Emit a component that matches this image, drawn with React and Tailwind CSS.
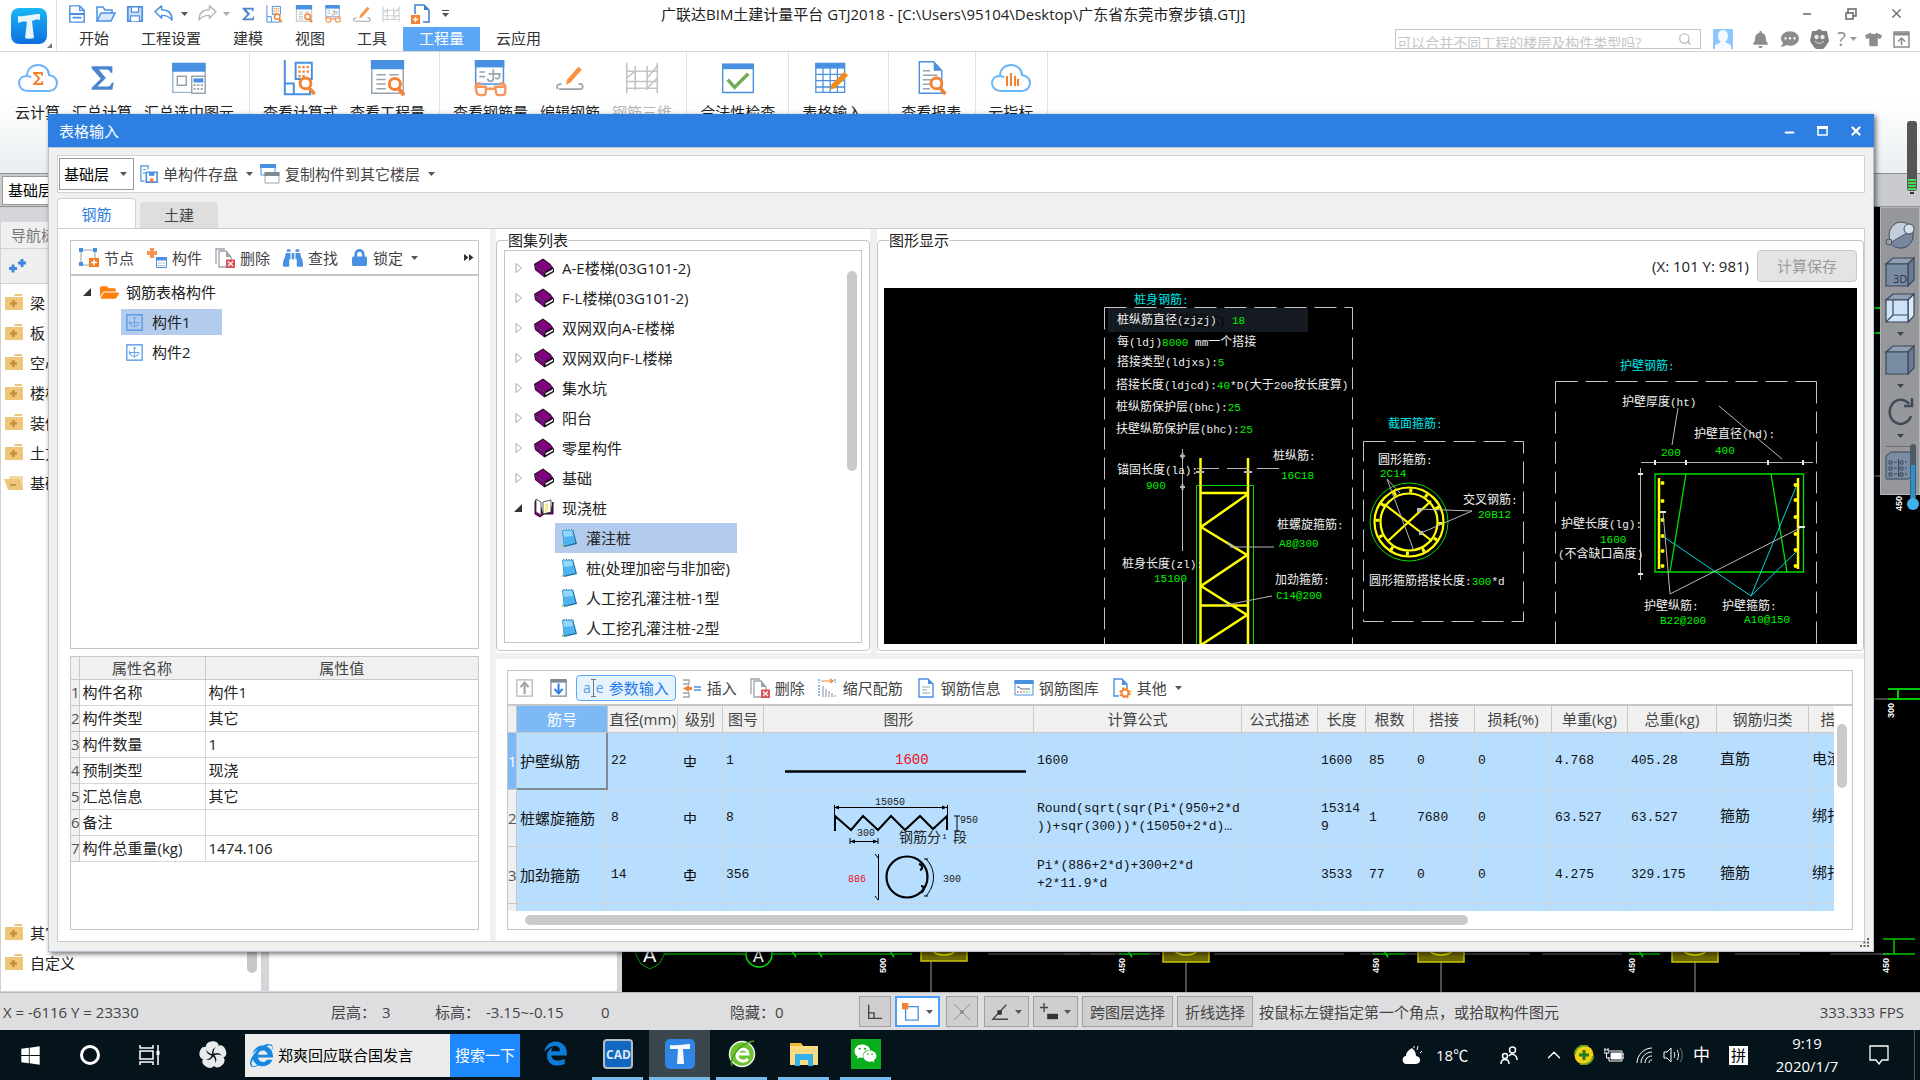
import React from 'react';
import {
  FaBell,
  FaBinoculars,
  FaCommentDots,
  FaEdgeLegacy,
  FaFolderOpen,
  FaInternetExplorer,
  FaLock,
  FaTshirt,
  FaWeixin,
  FaWindows,
} from 'react-icons/fa';
import { ChevronUp, Minus, Search, Square, X } from 'lucide-react';

const BLUE = '#4a90e2';
const ORANGE = '#f58232';
const GREY = '#9aa3aa';

/* ---------- icons ---------- */

const Svg = ({ size = 20, children, className = '', ...rest }) => (
  <svg width={size} height={size} viewBox="0 0 20 20" fill="none" className={`shrink-0 ${className}`} {...rest}>
    {children}
  </svg>
);

const Caret = ({ className = 'text-[#555]' }) => (
  <svg width="7" height="4" viewBox="0 0 7 4" className={`shrink-0 ${className}`}>
    <path d="M0 0h7L3.5 4z" fill="currentColor" />
  </svg>
);

const NewIcon = () => (
  <Svg size={18}>
    <path d="M2 1h11l5 5v13H2z" stroke={BLUE} strokeWidth="1.6" />
    <path d="M13 1v5h5" stroke={BLUE} strokeWidth="1.4" />
    <path d="M2 10h16M5 14h10" stroke={BLUE} strokeWidth="2" />
  </Svg>
);

const OpenIcon = () => (
  <Svg size={20}>
    <path d="M1 17V3h6l2 3h7v3" stroke={BLUE} strokeWidth="1.5" />
    <path d="M1 17l4-8h14l-4 8z" stroke={BLUE} strokeWidth="1.5" fill="#d7e8fb" />
  </Svg>
);

const SaveIcon = ({ size = 18 }) => (
  <Svg size={size}>
    <path d="M2 2h16v16H2z" stroke={BLUE} strokeWidth="2" fill="#cfe2f8" />
    <path d="M6 2h8v6H6z" fill="#fff" stroke={BLUE} strokeWidth="1.4" />
    <path d="M5 18v-6h10v6" fill="#fff" stroke={BLUE} strokeWidth="1.4" />
  </Svg>
);

const UndoIcon = ({ color = BLUE, flip = false }) => (
  <Svg size={19} className={flip ? '-scale-x-100' : ''}>
    <path d="M1 8l7-6v4c6 0 11 3 11 11-3-4-6-5-11-5v3z" stroke={color} strokeWidth="1.5" strokeLinejoin="round" />
  </Svg>
);

const SigmaIcon = ({ size = 16, color = '#4a86d0' }) => (
  <Svg size={size}>
    <path d="M2 1h16v5h-1.5C16 4 15 3.500 13 3.500H7.500L13 10l-6.500 6.500H14c2 0 3-1 3.500-3H19L18 19H2v-1.500L9 10.500 2 2.500z" fill={color} />
  </Svg>
);

const Magnifier = ({ x = 0, y = 0 }) => (
  <g transform={`translate(${x} ${y})`} stroke={ORANGE} strokeWidth="1.6">
    <circle cx="4" cy="4" r="3" fill="#fff" />
    <path d="M6 6.500l3 3.500" strokeWidth="2" />
  </g>
);

const CalcViewIcon = ({ size = 18 }) => (
  <Svg size={size}>
    <path d="M1 0v19h14v-5M1 13h5v6" stroke={BLUE} strokeWidth="1.100" />
    <path d="M7 1.500h9v9H7z" fill="#fff" stroke={BLUE} strokeWidth="1.100" />
    <path d="M8.500 4h6M8.500 6.500h6M8.500 9h4" stroke={ORANGE} strokeWidth="1.300" strokeDasharray="1.300 1" />
    <Magnifier x={8.500} y={9} />
  </Svg>
);

const AmountViewIcon = ({ size = 18 }) => (
  <Svg size={size}>
    <path d="M1.500 1h17v17h-17z" stroke={GREY} strokeWidth=".8" fill="#fff" />
    <path d="M1 0h18v5H1z" fill={BLUE} />
    <path d="M4 8h5M4 10.500h5M4 13h5M4 15.500h5M11 8h5" stroke={GREY} strokeWidth=".8" />
    <Magnifier x={10} y={9} />
  </Svg>
);

const GlassesIcon = ({ size = 18 }) => (
  <Svg size={size}>
    <path d="M2 1h15v12H2z" fill="#fff" stroke={BLUE} strokeWidth=".8" />
    <path d="M1.500 0h16v4h-16z" fill={BLUE} />
    <path d="M4 6.500h3M4 9h3M11.500 5v5c0 2-3 2-3 0M9 7.500h6c0 3-1.500 3-2.500 2" stroke={GREY} strokeWidth=".9" />
    <path d="M2 15c0-2 1.500-3 3-2M18 15c0-2-1.500-3-3-2M2 14.500h5.500v3c0 2-5 2-5 0zM12.500 14.500H18v3c0 2-5 2-5 0zM7.500 15.500h5" stroke="#f9955a" strokeWidth="1.300" />
  </Svg>
);

const EditIcon = ({ size = 18 }) => (
  <Svg size={size}>
    <path d="M1 18c-1-3 1-4 3-3.500M16 14.500c3-1 4 2 2 3.500H2" stroke={GREY} strokeWidth="1.200" />
    <path d="M7 15l1-4 8-9 2.500 2L10.500 13z" fill="#fb9140" />
  </Svg>
);

const GridIcon = ({ size = 18 }) => (
  <Svg size={size}>
    <path d="M1 1v18M6 3v14M13 3v14M19 1v18M1 6h18M1 12h18M1 16h18M6 6L1 10M19 3l-6 7M19 10l-6 6" stroke="#bfc3c6" strokeWidth=".9" />
  </Svg>
);

const AddDocIcon = () => (
  <Svg size={20}>
    <path d="M4 10V1h9l5 5v12h-6" stroke="#3b7fd0" strokeWidth="1.500" />
    <path d="M13 1v5h5" fill="#3b7fd0" />
    <path d="M0 11h9v9H0z" fill={ORANGE} />
    <path d="M2 15.500h5M4.500 13v5" stroke="#fff" strokeWidth="1.300" />
  </Svg>
);

const Cloud = ({ children }) => (
  <svg width="40" height="36" viewBox="0 0 40 36" fill="none" className="shrink-0">
    <path d="M10 31C4 31 1 27 1 23c0-4 3-7 8-7 0-7 5-11 11-11s11 4 11 10c5 1 8 4 8 8s-3 8-8 8zM9 16c2 0 3 .5 4 1.500" stroke="#6ab4f8" strokeWidth="2" />
    {children}
  </svg>
);

const SummarySelectedIcon = () => (
  <Svg size={36}>
    <path d="M1 2h18v16H1z" stroke="#9db5cc" strokeWidth=".8" />
    <path d="M.600 1.500h18.500v5H.600z" fill={BLUE} />
    <path d="M3.500 9h5v5h-5z" stroke={GREY} strokeWidth=".8" />
    <path d="M11.500 9h7.500v9.500h-7.500z" fill="#fff" stroke={GREY} strokeWidth=".8" />
    <path d="M12.500 10.200h5.500v2.300h-5.500z" fill={BLUE} />
    <path d="M12.500 14h5.500M12.500 16h5.500" stroke={GREY} strokeWidth="1" strokeDasharray="1.200 .8" />
  </Svg>
);

const CheckWindowIcon = () => (
  <Svg size={34}>
    <path d="M1 2h18v16.500H1z" stroke={BLUE} strokeWidth=".8" fill="#fff" />
    <path d="M.600 1.500h18.800v3.300H.600z" fill={BLUE} />
    <path d="M4 11l4 4.500 8-8" stroke="#6fab50" strokeWidth="2" />
  </Svg>
);

const TableInputIcon = () => (
  <Svg size={36}>
    <path d="M1 2h16v16H1zM5 4v14M9 4v14M13 4v14M1 8h16M1 11.500h16M1 15h16" stroke={BLUE} strokeWidth=".7" />
    <path d="M.700 1.500h16.600v3.300H.700z" fill={BLUE} />
    <path d="M9 16.500l.800-3 7-7 2.200 2-7 7z" fill="#f08c1c" />
  </Svg>
);

const ReportIcon = () => (
  <Svg size={36}>
    <path d="M3.500 1h8l4.500 5v12.500H3.500z" stroke={BLUE} strokeWidth=".8" />
    <path d="M11.500 1v5H16z" fill={BLUE} />
    <path d="M5.500 6h4M5.500 8.500h8M5.500 11h5M5.500 13.500h4M5.500 16h4" stroke={GREY} strokeWidth=".8" />
    <Magnifier x={9} y={9} />
  </Svg>
);

const NodeIcon = () => (
  <Svg>
    <path d="M2 2h14v15H2z" stroke={GREY} strokeWidth="1" />
    <path d="M0 0h4v4H0zM14 0h4v4h-4zM0 14h4v4H0z" fill={BLUE} />
    <path d="M10 10h10v9H10z" fill="#f47b20" />
    <path d="M12 14.500h6M15 11.500v6" stroke="#fff" strokeWidth="1.500" />
  </Svg>
);

const PartIcon = () => (
  <Svg>
    <path d="M3 0h4v3h3v4H7v3H3V7H0V3h3z" fill="#f79256" />
    <path d="M9.500 9.500h10v10h-10z" fill="#fff" stroke={BLUE} />
    <path d="M9 9h11v3.500H9z" fill={BLUE} />
    <path d="M11 15h7M11 17.500h7" stroke={GREY} strokeDasharray="1.600 1" />
  </Svg>
);

const DeleteIcon = () => (
  <Svg>
    <path d="M1 16V1h9" stroke={GREY} strokeWidth="1.300" />
    <path d="M4 3h7l5 6v10H4z" stroke={GREY} strokeWidth="1.300" fill="#fff" />
    <path d="M11 3v6h5z" fill={GREY} />
    <path d="M11 11.500h9V20h-9z" fill="#d9515a" />
    <path d="M13 13.500l5 4.500M18 13.500L13 18" stroke="#fff" strokeWidth="1.100" />
  </Svg>
);

// chunky square-cut binoculars
const FindIcon = () => <FaBinoculars size={20} color={BLUE} className="shrink-0" />;

const SinglePartIcon = () => (
  <Svg size={18}>
    <path d="M1 18V1h8v4M1 18h4M3.500 5h3M3.500 9h2" stroke={BLUE} strokeWidth="1.300" />
    <path d="M7 8h12v11H7z" stroke={BLUE} strokeWidth="1.800" fill="#fff" />
    <path d="M10 8h6v4h-6z" fill={BLUE} />
    <path d="M11 15h4v4h-4z" fill={ORANGE} />
  </Svg>
);

const CopyPartIcon = () => (
  <Svg>
    <path d="M1 1h14v10H1z" stroke={BLUE} fill="#fff" />
    <path d="M0 0h16v4H0z" fill={BLUE} />
    <path d="M5 9h14v10H5z" stroke={GREY} fill="#fff" />
    <path d="M4.500 8h15v4h-15z" fill="#7f8b93" />
  </Svg>
);

const RebarNodeIcon = () => (
  <Svg size={17}>
    <path d="M1 1h18v18H1z" stroke={BLUE} strokeWidth="1.400" />
    <path d="M10 4v12M4 10h12M12 5c-3-2-3 0-2 2M5 10c0 6 8 6 10 1M4 8v4" stroke="#69a6ea" strokeWidth="1.200" />
  </Svg>
);

const BookIcon = () => (
  <Svg>
    <path d="M0 6L9 .500l7.500 5.500L20 11v3l-9.500 5.500L1 12z" fill="#1b0a1b" />
    <path d="M1.500 6.500L9 1.500l9.500 7.500-8 5z" fill="#800080" />
    <path d="M1 8l9 7v3.500L1.500 11.500z" fill="#800080" />
    <path d="M11 15.500l8-4.500M11 18l8-4.500" stroke="#1b0a1b" />
    <path d="M11.500 15.300l7.500-4.200v2l-7.500 4.200z" fill="#f2f2f2" />
    <path d="M1.500 7.500l9 7" stroke="#d9a0d9" strokeWidth=".8" strokeDasharray="1.500 1" />
  </Svg>
);

const OpenBookIcon = () => (
  <Svg>
    <path d="M1 4v12l5 3 4-3h9V4l-2 10-8 2-4-12-3-2z" fill="#800080" stroke="#2a0a2a" />
    <path d="M2 1l5 3v13l-5-3zM17 2L9 4v12l8-2z" fill="#fff" stroke="#333" strokeWidth=".8" />
    <path d="M11 6l3-1v8l-3 1z" fill="#f5ec7a" />
  </Svg>
);

const NoteIcon = () => (
  <Svg>
    <path d="M2 1h11l4 15-13 3z" fill="#1f6c9c" />
    <path d="M2 2h10.500l3 13-12.500 3c1-5 0-11-1-16z" fill="#4db4ef" />
    <path d="M3 3h9l1 5-9 1z" fill="#93d6fa" />
    <path d="M2 1.500h11" stroke="#e8f3fa" strokeWidth="1.200" strokeDasharray="1.500 1" />
    <path d="M1 19l2-3 1 2z" fill="#9bbf57" />
  </Svg>
);

const NavFolderIcon = ({ open = false }) => (
  <Svg size={20}>
    {open ? (
      <>
        <path d="M5 3h14v13H6z" fill="#f3d9a2" />
        <path d="M0 6h16l3 11H4z" fill="#efc679" />
        <path d="M6 12h6" stroke="#b98a36" strokeWidth="1.500" />
      </>
    ) : (
      <>
        <path d="M1 4h18v13H1zM11 1h7v2h-8z" fill="#efc679" />
        <path d="M6 10.500h7M9.500 7v7" stroke="#c4913a" strokeWidth="2.500" />
      </>
    )}
  </Svg>
);

const MoveIcon = ({ down = false }) => (
  <Svg size={18}>
    <path d="M1 1h17v18H1z" stroke={down ? '#7d8b96' : '#b5b5b5'} strokeWidth="1.400" />
    {down && <path d="M1 0h17v4H1z" fill="#7d8b96" />}
    <path
      d={down ? 'M9.500 5v10M5 11l4.500 5L14 11' : 'M9.500 17V5M5 9l4.500-5L14 9'}
      stroke={down ? '#2d7fe2' : '#a0a0a0'}
      strokeWidth="2.200"
    />
  </Svg>
);

const InsertIcon = () => (
  <Svg>
    <path d="M1 2h6v4H1M1 15h6v4H1" stroke={GREY} strokeWidth="1.300" />
    <path d="M7 9v-2l-6 3.500L7 14v-2h3V9z" fill={ORANGE} />
    <path d="M12 9h7M12 12h7" stroke={BLUE} strokeWidth="1.600" />
  </Svg>
);

const ScaleIcon = () => (
  <Svg>
    <path d="M3 3h11M12 1l3 2-3 2" stroke={ORANGE} strokeWidth="1.200" />
    <path d="M1 1v4M17 1v4M1 7v12" stroke={BLUE} strokeWidth="1.200" strokeDasharray="2 1" />
    <path d="M5 8v11M8 11v8M11 13v6M14 15v4M17 17v2" stroke={GREY} strokeWidth="1.200" />
  </Svg>
);

const InfoDocIcon = () => (
  <Svg>
    <path d="M3 1h9l5 5v13H3z" stroke={BLUE} strokeWidth="1.400" />
    <path d="M12 1v5h5z" fill={BLUE} />
    <path d="M6 9h8M6 12h5M6 15h8" stroke={GREY} />
  </Svg>
);

const LibraryIcon = () => (
  <Svg>
    <path d="M1 3h18v14H1z" stroke={BLUE} />
    <path d="M.500 2h19v4H.500z" fill={BLUE} />
    <path d="M3 9h2l2 2h9" stroke="#5a6b78" />
    <path d="M3 14h5" stroke="#e34f4f" strokeDasharray="2 1" />
    <path d="M9 14h7" stroke="#5bbf4a" strokeDasharray="2 1" />
  </Svg>
);

const OtherIcon = () => (
  <Svg>
    <path d="M7 18H2V1h8l5 5v4" stroke={BLUE} strokeWidth="1.400" />
    <path d="M10 1v6h5z" fill={BLUE} />
    <circle cx="13" cy="15" r="3.500" stroke={ORANGE} strokeWidth="2" />
    <circle cx="13" cy="15" r="5" stroke={ORANGE} strokeWidth="1.500" strokeDasharray="2 2" />
  </Svg>
);

const AppLogo = () => (
  <svg width="36" height="36" viewBox="0 0 36 36" className="shrink-0">
    <defs>
      <linearGradient id="logo" x1="0" y1="0" x2="0" y2="1">
        <stop offset="0" stopColor="#19b6f5" />
        <stop offset="1" stopColor="#0e6fdf" />
      </linearGradient>
    </defs>
    <rect width="36" height="36" rx="8" fill="url(#logo)" />
    <path d="M7 8c7 1 14-2 22-2v6c-3-1-5 0-8 1l2 17c-3 1-7 1-9 0l2-16c-3-1-6 0-9 1z" fill="#e6f4fd" />
  </svg>
);

/* ---------- application header ---------- */

const menuTabs = ['开始', '工程设置', '建模', '视图', '工具', '工程量', '云应用'];

const Header = () => (
  <header className="flex h-[52px] shrink-0 border-b border-[#d5d5d5] bg-white">
    <div className="relative flex w-[57px] shrink-0 items-center border-r border-[#e0e0e0] pl-[11px]">
      <AppLogo />
      <svg width="5" height="5" viewBox="0 0 5 5" className="absolute bottom-[3px] right-1">
        <path d="M5 0v5H0z" fill="#777" />
      </svg>
    </div>
    <div className="flex min-w-0 flex-1 flex-col">
      <div className="flex h-[27px] items-center justify-between">
        <div className="flex items-center pl-[11px]">
          <div className="flex items-center gap-[10px]">
            <NewIcon />
            <OpenIcon />
            <SaveIcon />
            <UndoIcon />
          </div>
          <div className="flex items-center gap-[10px] pl-2">
            <Caret />
            <UndoIcon color="#b8b8b8" flip />
          </div>
          <div className="flex items-center gap-[11px] pl-[6px]">
            <Caret className="text-[#aaa]" />
            <SigmaIcon size={14} />
            <CalcViewIcon />
            <AmountViewIcon />
            <GlassesIcon />
            <EditIcon />
            <GridIcon />
            <AddDocIcon />
            <span className="flex flex-col items-center gap-[2px]">
              <span className="h-px w-[7px] bg-[#444]" />
              <Caret />
            </span>
          </div>
        </div>
        <h1 className="flex-1 whitespace-nowrap pl-[212px] text-[15px] leading-5 text-[#222]">
          广联达BIM土建计量平台 GTJ2018 - [C:\Users\95104\Desktop\广东省东莞市寮步镇.GTJ]
        </h1>
        <div className="flex items-center gap-8 pr-4 text-[#666]">
          <button aria-label="最小化">
            <Minus size={12} strokeWidth={3} />
          </button>
          <button aria-label="还原">
            <svg width="12" height="12" viewBox="0 0 12 12" fill="none" stroke="currentColor" strokeWidth="1.500">
              <path d="M1 5h7v6H1zM3 5V1h8v7H8" />
            </svg>
          </button>
          <button aria-label="关闭">
            <X size={15} strokeWidth={2} />
          </button>
        </div>
      </div>
      <div className="flex flex-1 items-center justify-between">
        <nav className="flex h-full pl-[6px]">
          {menuTabs.map((t) => (
            <button
              key={t}
              className={`px-4 pb-[3px] text-[15px] leading-5 ${t === '工程量' ? 'bg-[#5ba6f6] text-white' : 'text-[#333]'}`}
            >
              {t}
            </button>
          ))}
        </nav>
        <div className="flex items-center pr-[10px] text-[#8c8c8c]">
          <label className="flex h-[20px] w-[306px] items-center overflow-hidden border border-[#c4c4c4] pl-px pr-2">
            <input
              className="min-w-0 flex-1 pt-[7px] text-[14px] leading-5 outline-none placeholder:text-[#c6c6c6]"
              placeholder="可以合并不同工程的楼层及构件类型吗?"
              aria-label="搜索"
            />
            <Search size={14} className="text-[#b5b5b5]" />
          </label>
          <svg width="20" height="20" viewBox="0 0 20 20" className="ml-3 shrink-0">
            <path d="M0 0h20v20H0z" fill="#8fc7fd" />
            <path d="M5 7c0-8 10-8 10 0l-1 4-2 2 6 3v4H2v-4l6-3-2-2z" fill="#f3f9ff" />
          </svg>
          <FaBell size={17} className="ml-[19px]" />
          <FaCommentDots size={18} className="ml-3" />
          <svg width="19" height="20" viewBox="0 0 19 20" className="ml-[11px] shrink-0">
            <path d="M2 2l4 0 3-2 4 2 4 0 1 5 1 5-3 5-3 3H6l-3-3-3-5 1-5z" fill="#808080" />
            <circle cx="6.500" cy="8" r="2.200" fill="#e8e8e8" />
            <circle cx="12.500" cy="8" r="2.200" fill="#e8e8e8" />
            <path d="M5 12c3 3 6 3 9 0" stroke="#ddd" fill="none" />
          </svg>
          <span className="ml-2 flex items-center gap-1 text-[20px] leading-5">
            ?<Caret className="text-[#999]" />
          </span>
          <FaTshirt size={17} className="ml-2" />
          <svg width="17" height="17" viewBox="0 0 17 17" className="ml-[11px] shrink-0" fill="none" stroke="currentColor">
            <path d="M1 1h15v15H1z" strokeWidth="1.500" />
            <path d="M1 3h15" strokeWidth="3" />
            <path d="M8.500 14V7M5 10.500L8.500 7l3.500 3.500" strokeWidth="1.500" />
          </svg>
        </div>
      </div>
    </div>
  </header>
);

const ribbon = [
  {
    pad: 'pl-[15px] pr-[15px]',
    items: [
      {
        label: '云计算',
        icon: (
          <Cloud>
            <path d="M15 12h10v4h-1.200l-.800-2h-4.500l4 4.500-4 4.500H23l.800-2H25v4H15v-1.500l5-5-5-5z" fill={ORANGE} />
          </Cloud>
        ),
      },
      { label: '汇总计算', icon: <SigmaIcon size={26} /> },
      { label: '汇总选中图元', icon: <SummarySelectedIcon /> },
    ],
  },
  {
    pad: 'pl-[13px] pr-[14px]',
    items: [
      { label: '查看计算式', icon: <CalcViewIcon size={36} /> },
      { label: '查看工程量', icon: <AmountViewIcon size={37} /> },
    ],
  },
  {
    pad: 'pl-[13px] pr-[14px]',
    items: [
      { label: '查看钢筋量', icon: <GlassesIcon size={37} /> },
      { label: '编辑钢筋', icon: <EditIcon size={28} /> },
      { label: '钢筋三维', icon: <GridIcon size={34} />, off: true },
    ],
  },
  { pad: 'pl-[13px] pr-[13px]', items: [{ label: '合法性检查', icon: <CheckWindowIcon /> }] },
  { pad: 'pl-[13px] pr-[26px]', items: [{ label: '表格输入', icon: <TableInputIcon /> }] },
  { pad: 'pl-3 pr-[14px]', items: [{ label: '查看报表', icon: <ReportIcon /> }] },
  {
    pad: 'pl-3 pr-[14px]',
    items: [
      {
        label: '云指标',
        icon: (
          <Cloud>
            <path d="M16 26V16M20 26V13M24 26V16M27 26v-7" stroke={ORANGE} strokeWidth="2" />
          </Cloud>
        ),
      },
    ],
  },
];

const Ribbon = () => (
  <div className="flex h-[121px] shrink-0 bg-gradient-to-b from-white from-40% to-[#e9eef0]">
    {ribbon.map((g, i) => (
      <div key={i} className={`flex gap-3 border-r border-[#e2e2e2] pt-2 ${g.pad}`}>
        {g.items.map((it) => (
          <button
            key={it.label}
            className={`flex flex-col items-center gap-[6px] whitespace-nowrap text-[15px] leading-5 ${
              it.off ? 'text-[#b5b5b5]' : 'text-[#222]'
            }`}
          >
            <span className="flex h-9 items-center">{it.icon}</span>
            {it.label}
          </button>
        ))}
      </div>
    ))}
  </div>
);

/* ---------- workspace behind the dialog ---------- */

const navTop = ['梁', '板', '空心楼盖', '楼梯', '装修', '土方', '基础'];
const navBottom = ['其它', '自定义'];

const NavRow = ({ label }) => (
  <li className="flex h-[30px] items-center gap-[6px] pl-[3px] text-[15px] leading-5 text-[#222]">
    <NavFolderIcon open={label === '基础'} />
    {label}
  </li>
);

const NavPanel = () => (
  <aside className="flex w-[262px] shrink-0 flex-col border border-[#cfd2d6] bg-white">
    <div className="h-[14px] bg-[#d5d6da]" />
    <div className="flex h-[27px] items-center border-b border-[#cfd2d6] bg-[#efefef] pl-[10px] text-[15px] leading-5 text-[#777]">
      导航树
    </div>
    <div className="flex h-[35px] items-center border-b border-[#cfd2d6] bg-[#efefef] pl-2">
      <svg width="17" height="14" viewBox="0 0 17 14" stroke="#3f87dc" strokeWidth="3">
        <path d="M0 9.500h8M4 5.500v8M9 4h8M13 0v8" />
      </svg>
    </div>
    <div className="flex flex-1 justify-between">
      <ul className="flex flex-col justify-between pb-[13px] pt-1">
        <li>
          <ul>
            {navTop.map((n) => (
              <NavRow key={n} label={n} />
            ))}
          </ul>
        </li>
        <li>
          <ul>
            {navBottom.map((n) => (
              <NavRow key={n} label={n} />
            ))}
          </ul>
        </li>
      </ul>
      <div className="mb-[18px] mr-1 w-[10px] self-end rounded-full bg-[#c8c8c8] pt-[300px]" />
    </div>
  </aside>
);

const Footing = ({ x, h = 10 }) => (
  <g>
    <path d={`M${x - 23} 945h46v${7 + h}h-46z`} fill="#6e6a00" stroke="#c8c400" strokeWidth="1.500" />
    <ellipse cx={x} cy="950" rx="11" ry="5" fill="none" stroke="#f0f000" strokeWidth="1.500" />
  </g>
);

const MainCanvas = () => (
  <div className="relative min-w-0 flex-1 bg-black">
    <svg viewBox="622 207 1298 785" preserveAspectRatio="xMinYMin slice" className="absolute inset-0 h-full w-full" fill="none">
      <path d="M988 954h92M1064 954h50M1090 954h70M1214 954h130M1360 954h60M1464 954h66M1542 954h80M1735 954h65M1830 954h60" stroke="#777" />
      <path d="M931 961v31M1186 961v31M1441 961v31M1695 961v31" stroke="#999" />
      <path d="M664 954h248M1119 954h31M1373 954h32M1629 954h31M1883 954h32M1883 939h32M1894 939v15" stroke="#00c800" strokeWidth="1.500" />
      <path d="M792 951l4 6M818 951l4 6M890 951l4 6M1128 951l4 6M1384 951l4 6M1639 951l4 6" stroke="#00ff00" strokeWidth="1.500" />
      <path d="M636 945v10l5 9 9 5 9-5 5-9v-10z" stroke="#00a000" />
      <circle cx="759" cy="954" r="13" fill="#000" stroke="#00e000" strokeWidth="1.500" />
      <g fill="#fff" className="font-['Liberation_Sans',sans-serif]">
        <text x="643" y="962" fontSize="20">A</text>
        <text x="753" y="962" fontSize="16">A</text>
        <g fontSize="9" fontWeight="bold">
          <text transform="translate(886 973) rotate(-90)">500</text>
          {[1125, 1379, 1635, 1889].map((x) => (
            <text key={x} transform={`translate(${x} 973) rotate(-90)`}>450</text>
          ))}
          <text transform="translate(1894 718) rotate(-90)">300</text>
          <text transform="translate(1902 511) rotate(-90)">450</text>
        </g>
      </g>
      <Footing x={944} h={9} />
      <Footing x={1186} />
      <Footing x={1441} />
      <Footing x={1695} />
      <path d="M1874 308h6M1874 333h6M1888 689h32M1888 699h32M1898 689v10M1895 491h25" stroke="#00c800" strokeWidth="2" />
      <path d="M1874 699h14M1874 476h6" stroke="#888" />
    </svg>
    <div className="absolute right-0 top-0 flex w-10 flex-col items-center gap-1 border border-[#b5b6ba] bg-[#96979b] pb-[13px] pt-[13px]">
      <Orb />
      <span className="pt-[3px]"><Cube face="#7a8ca3" label="3D" /></span>
      <Cube face="#cfe3f8" inner />
      <Caret className="my-1 text-[#3a4350]" />
      <Cube face="#7a8ca3" />
      <Caret className="my-1 text-[#3a4350]" />
      <svg width="28" height="30" viewBox="0 0 28 30" fill="none" stroke="#3f4a57" strokeWidth="2.500">
        <path d="M23 8A11 12 0 1 0 25 20" />
        <path d="M26 2v8h-8" />
      </svg>
      <Caret className="my-1 text-[#3a4350]" />
      <span className="h-px w-7 bg-[#6c6d70]" />
      <svg width="30" height="30" viewBox="0 0 30 30" fill="#7a8ca3" stroke="#3a4656">
        <path d="M1 5l5-4h22v23l-5 4H1z" />
        <path d="M4 10h3v3H4zM4 16h3v3H4zM4 22h3v3H4zM15 10h3v3h-3zM15 16h3v3h-3zM15 22h3v3h-3zM9 11h3M9 17h3M9 23h3M20 11h2M20 17h2M20 23h2M13.500 8v18" />
      </svg>
    </div>
  </div>
);

const Orb = () => (
  <svg width="30" height="28" viewBox="0 0 30 28" fill="#b9c6d6" stroke="#46505e">
    <ellipse cx="16" cy="14" rx="12" ry="13" fill="#c3cedb" />
    <path d="M5 22L27 9c3 6 0 17-10 18-5 0-9-1-12-5z" fill="#7588a0" />
    <circle cx="24" cy="8" r="5" fill="#d8e0ea" />
    <circle cx="4" cy="21" r="3" fill="#9a9fa6" />
  </svg>
);

const Cube = ({ face, label, inner }) => (
  <svg width="30" height="32" viewBox="0 0 30 32" stroke="#3a4656" strokeWidth="1.200">
    <path d="M1 8l7-6h21l-6 6z" fill="#8fa0b5" />
    <path d="M23 8l6-6v22l-6 6z" fill={inner ? '#dcebfb' : '#6b7c92'} />
    <path d="M1 8h22v22H1z" fill={face} />
    {inner && <path d="M8 8v15h15M8 23l-7 7" fill="none" />}
    {label && (
      <text x="8" y="27" fontSize="11" fill="#27313d" stroke="none">
        {label}
      </text>
    )}
  </svg>
);

/* ---------- dialog: left column ---------- */

const ToolItem = ({ icon, label, caret }) => (
  <button className="flex items-center gap-[5px] whitespace-nowrap text-[15px] leading-5 text-[#444]">
    {icon}
    {label}
    {caret && <span className="pl-[3px]"><Caret /></span>}
  </button>
);

const Expanded = () => (
  <svg width="8" height="8" viewBox="0 0 8 8" className="shrink-0">
    <path d="M8 0v8H0z" fill="#333" />
  </svg>
);

const Collapsed = () => (
  <svg width="8" height="12" viewBox="0 0 8 12" className="shrink-0">
    <path d="M1 1.500v9L6.500 6z" fill="none" stroke="#aaa" />
  </svg>
);

const properties = [
  ['构件名称', '构件1'],
  ['构件类型', '其它'],
  ['构件数量', '1'],
  ['预制类型', '现浇'],
  ['汇总信息', '其它'],
  ['备注', ''],
  ['构件总重量(kg)', '1474.106'],
];

const LeftColumn = () => (
  <section className="flex w-[432px] shrink-0 flex-col bg-white py-[11px] pl-3 pr-[11px]">
    <div className="flex min-h-0 flex-1 flex-col border border-[#c3c6ca]">
      <div className="flex h-[35px] shrink-0 items-center justify-between border-b-2 border-[#c3c6ca] pl-2 pr-1">
        <div className="flex items-center gap-[13px]">
          <ToolItem icon={<NodeIcon />} label="节点" />
          <ToolItem icon={<PartIcon />} label="构件" />
          <ToolItem icon={<DeleteIcon />} label="删除" />
          <ToolItem icon={<FindIcon />} label="查找" />
          <ToolItem icon={<FaLock size={17} color={BLUE} />} label="锁定" caret />
        </div>
        <button aria-label="更多">
          <svg width="10" height="7" viewBox="0 0 10 7" fill="#333">
            <path d="M0 0l4.500 3.500L0 7zM5 0l4.500 3.500L5 7z" />
          </svg>
        </button>
      </div>
      <ul className="pt-px text-[15px] leading-5 text-[#222]">
        <li className="flex h-[30px] items-center pl-3">
          <Expanded />
          <FaFolderOpen size={19} color="#ff7f0e" className="ml-[9px] mr-[7px]" />
          钢筋表格构件
        </li>
        {['构件1', '构件2'].map((n, i) => (
          <li key={n} className="flex h-[30px] items-center pl-[50px]">
            <span className={`flex h-[26px] w-[101px] items-center gap-[9px] pl-[5px] ${i === 0 ? 'bg-[#b3cced]' : ''}`}>
              <RebarNodeIcon />
              {n}
            </span>
          </li>
        ))}
      </ul>
    </div>
    <div className="mt-[7px] h-[274px] shrink-0 border border-[#c3c6ca]">
      <table className="w-full table-fixed border-collapse text-[15px] leading-5 text-[#222]">
        <colgroup>
          <col className="w-[8px]" />
          <col className="w-[126px]" />
          <col />
        </colgroup>
        <thead>
          <tr className="h-[22px] bg-[#f0f0f0] text-[#444]">
            <th className="border-b border-r border-[#c8c8c8]" />
            <th className="border-b border-r border-[#c8c8c8] font-normal">属性名称</th>
            <th className="border-b border-[#c8c8c8] font-normal">属性值</th>
          </tr>
        </thead>
        <tbody>
          {properties.map(([name, value], i) => (
            <tr key={name} className="h-[26px]">
              <td className="border-b border-r border-[#c8c8c8] bg-[#f0f0f0] text-[#555]">{i + 1}</td>
              <td className="whitespace-nowrap border-b border-r border-[#d8d8d8] pl-[3px]">{name}</td>
              <td className="border-b border-[#d8d8d8] pl-[3px]">{value}</td>
            </tr>
          ))}
        </tbody>
      </table>
    </div>
  </section>
);

/* ---------- dialog: atlas list ---------- */

const atlas = ['A-E楼梯(03G101-2)', 'F-L楼梯(03G101-2)', '双网双向A-E楼梯', '双网双向F-L楼梯', '集水坑', '阳台', '零星构件', '基础'];
const piles = ['灌注桩', '桩(处理加密与非加密)', '人工挖孔灌注桩-1型', '人工挖孔灌注桩-2型'];

const AtlasList = () => (
  <div className="bg-white pb-[2px] pt-px">
    <fieldset className="flex h-full w-[374px] min-w-0 flex-col rounded border border-[#c3c6ca] px-[7px] pb-[7px]">
      <legend className="ml-1 text-[15px] leading-5 text-[#222]">图集列表</legend>
      <div className="flex min-h-0 flex-1 justify-between overflow-hidden border border-[#c3c6ca] pr-1">
        <ul className="pt-[2px] text-[15px] leading-5 text-[#222]">
          {atlas.map((a) => (
            <li key={a} className="flex h-[30px] items-center pl-[10px]">
              <Collapsed />
              <span className="ml-[11px] mr-2"><BookIcon /></span>
              {a}
            </li>
          ))}
          <li className="flex h-[30px] items-center pl-[9px]">
            <Expanded />
            <span className="ml-3 mr-2"><OpenBookIcon /></span>
            现浇桩
          </li>
          {piles.map((p, i) => (
            <li key={p} className="pl-[50px]">
              <span className={`flex h-[30px] w-[182px] items-center gap-[6px] whitespace-nowrap pl-[5px] ${i === 0 ? 'bg-[#b3cced]' : ''}`}>
                <NoteIcon />
                {p}
              </span>
            </li>
          ))}
        </ul>
        <div className="mt-[20px] h-[200px] w-[10px] rounded-full bg-[#cacaca]" />
      </div>
    </fieldset>
  </div>
);

/* ---------- dialog: drawing ---------- */

const tones = { w: '#f0f0f0', g: '#00f000', c: '#00e8e8' };

// parts is a list of [tone, text]; full-width and half-width runs get their own size
const Note = ({ x, y, parts }) => (
  <text x={x} y={y + 4} xmlSpace="preserve">
    {parts.map(([tone, text], i) =>
      text.split(/([\u4e00-\u9fff]+)/).filter(Boolean).map((run, j) => (
        <tspan
          key={`${i}-${j}`}
          fill={tones[tone]}
          className={/[\u4e00-\u9fff]/.test(run) ? 'text-[12px]' : 'text-[11px]'}
        >
          {run}
        </tspan>
      ))
    )}
  </text>
);

const notes = [
  [1134, 300, [['c', '桩身钢筋:']]],
  [1117, 320, [['w', '桩纵筋直径(zjzj)']]],
  [1232, 320, [['g', '18']]],
  [1117, 342, [['w', '每(ldj)'], ['g', '8000'], ['w', ' mm一个搭接']]],
  [1117, 362, [['w', '搭接类型(ldjxs):'], ['g', '5']]],
  [1116, 385, [['w', '搭接长度(ldjcd):'], ['g', '40'], ['w', '*D(大于200按长度算)']]],
  [1116, 407, [['w', '桩纵筋保护层(bhc):'], ['g', '25']]],
  [1116, 429, [['w', '扶壁纵筋保护层(bhc):'], ['g', '25']]],
  [1117, 470, [['w', '锚固长度(la):']]],
  [1146, 485, [['g', '900']]],
  [1273, 456, [['w', '桩纵筋:']]],
  [1281, 475, [['g', '16C18']]],
  [1277, 525, [['w', '桩螺旋箍筋:']]],
  [1279, 543, [['g', 'A8@300']]],
  [1122, 564, [['w', '桩身长度(zl):']]],
  [1154, 578, [['g', '15100']]],
  [1275, 580, [['w', '加劲箍筋:']]],
  [1276, 595, [['g', 'C14@200']]],
  [1388, 424, [['c', '截面箍筋:']]],
  [1378, 460, [['w', '圆形箍筋:']]],
  [1380, 473, [['g', '2C14']]],
  [1463, 500, [['w', '交叉钢筋:']]],
  [1478, 514, [['g', '20B12']]],
  [1369, 581, [['w', '圆形箍筋搭接长度:'], ['g', '300'], ['w', '*d']]],
  [1620, 366, [['c', '护壁钢筋:']]],
  [1622, 402, [['w', '护壁厚度(ht)']]],
  [1661, 452, [['g', '200']]],
  [1694, 434, [['w', '护壁直径(hd):']]],
  [1715, 450, [['g', '400']]],
  [1561, 524, [['w', '护壁长度(lg):']]],
  [1600, 539, [['g', '1600']]],
  [1558, 554, [['w', '(不含缺口高度)']]],
  [1644, 606, [['w', '护壁纵筋:']]],
  [1660, 620, [['g', 'B22@200']]],
  [1722, 606, [['w', '护壁箍筋:']]],
  [1744, 619, [['g', 'A10@150']]],
];

const Drawing = () => (
  <svg viewBox="884 288 973 357" preserveAspectRatio="xMinYMin slice" className="absolute inset-0 h-full w-full" fill="none">
    <rect x="1108" y="308" width="200" height="24" fill="#141a20" />
    <text x="1147" y="326" fontSize="15" fill="#05080b">屏幕截图(S)</text>
    <g stroke="#c4c4c4" strokeDasharray="22 8">
      <path d="M1104.500 307.500h248M1104.500 307.500V645M1352.500 307.500V645" />
      <path d="M1363.500 441.500h160v180h-160z" />
      <path d="M1555.500 381.500h261M1555.500 381.500V645M1816.500 381.500V645" />
    </g>

    {/* pile body */}
    <path d="M1196.500 645V485.500h57V645" stroke="#00d800" />
    <g stroke="#ffff00" strokeWidth="2.500">
      <path d="M1200.500 458v187M1248 458v187M1200 493h48M1248 494l-47 33 46 28-46 31 46 29-46 30M1200 605.500h47" />
    </g>
    <g stroke="#b8b8b8">
      <path d="M1182.500 449v102M1182.500 580v65M1222 606l14-3 36-7M1230 547h44" />
      <path d="M1197 468.500h83" strokeDasharray="22 8" />
      <path d="M1180 456h5M1182.500 453v6M1180 487h5M1182.500 484v6M1196 472h8M1244 472h8M1228 543l6 4" strokeWidth="2" />
    </g>

    {/* cross section */}
    <circle cx="1409" cy="522" r="39" stroke="#00d800" />
    <g stroke="#ffff00" strokeWidth="2.200">
      <circle cx="1409" cy="522" r="34.500" />
      <circle cx="1409" cy="522" r="28.500" />
      <circle cx="1409" cy="522" r="31.500" strokeWidth="4" strokeDasharray="3 13.500" />
      <path d="M1384 504l48 37M1431 501l-43 40" />
    </g>
    <path d="M1387 479l27 72M1387 479l13 14M1418 509l54 2-51 22" stroke="#b8b8b8" />
    <path d="M1417 508h4v4h-4zM1419 531h4v4h-4z" fill="#b8b8b8" />

    {/* retaining wall */}
    <path d="M1655 474h148.500v98H1655zM1686 474l-16 98M1771 474l16 98" stroke="#00e000" strokeWidth="1.300" />
    <path d="M1659 478v91M1798 478v91" stroke="#ffff00" strokeWidth="2.500" />
    <g fill="#ffff00">
      {[483, 501, 520, 536, 551, 566].map((y) => (
        <circle key={y} cx="1662.500" cy={y} r="2" />
      ))}
      {[485, 500, 517, 534, 550, 566].map((y) => (
        <circle key={y} cx="1795.500" cy={y} r="2" />
      ))}
    </g>
    <path d="M1664 537l87 59 45-109M1751 596l45-44" stroke="#00d8e0" />
    <path d="M1663 512l7 82 132-67M1678 408l-6 37M1719 406l63 53M1641 462.500h172M1640.500 468v112" stroke="#b8b8b8" />
    <path d="M1655 460v5M1686 460v5M1768 460v5M1803 460v5M1638 474h5M1638 574h5M1660 512h6M1798 527h7" stroke="#e8e8e8" strokeWidth="2" />

    <g className="font-['Liberation_Mono','Noto_Sans_CJK_SC',monospace]">
      {notes.map(([x, y, parts]) => (
        <Note key={`${x}-${y}`} x={x} y={y} parts={parts} />
      ))}
    </g>
  </svg>
);

const DrawingPanel = () => (
  <div className="min-w-0 flex-1 bg-white pb-[2px] pt-px">
    <fieldset className="flex h-full w-full min-w-0 flex-col rounded border border-[#c3c6ca] px-[6px] pb-[6px]">
      <legend className="ml-[5px] text-[15px] leading-5 text-[#222]">图形显示</legend>
      <div className="flex shrink-0 items-center justify-end gap-2 pb-[6px]">
        <output className="text-[15px] leading-5 text-[#222]">(X: 101 Y: 981)</output>
        <button disabled className="h-8 w-[100px] rounded border border-[#c3cad6] bg-[#e4e4e4] text-[15px] leading-5 text-[#9c9c9c]">
          计算保存
        </button>
      </div>
      <div className="relative min-h-0 flex-1 bg-black">
        <Drawing />
      </div>
    </fieldset>
  </div>
);

/* ---------- dialog: rebar table ---------- */

const Grade = ({ bars }) => (
  <svg width="12" height="14" viewBox="0 0 12 14" fill="none" stroke="#111" strokeWidth="1.200">
    <path d="M1 4.500h10v5H1zM6 1v12" />
    {bars > 0 && <path d="M2 12.500h8" />}
    {bars > 1 && <path d="M3 2.500h6" />}
  </svg>
);

const StraightShape = () => (
  <svg width="266" height="56" viewBox="0 0 266 56" className="font-['Liberation_Mono',monospace]">
    <text x="131" y="31" fontSize="14" fill="#f01020">1600</text>
    <path d="M21 38.500h241" stroke="#000" strokeWidth="2.500" />
  </svg>
);

const SpiralShape = () => (
  <svg width="266" height="56" viewBox="0 0 266 56" fill="none" stroke="#000" className="font-['Liberation_Mono','Noto_Sans_CJK_SC',monospace]">
    <path d="M70.500 15v10M183.500 15v10M70 17.500h113M190 26h6M190 41h6M193 26v15M86 51.500h28M86 48v6M114 48v6" />
    <path d="M71 41V26l16 14 12-14 15 14 13-14 14 14 15-14 13 13 14-13v14" strokeWidth="2" />
    <path d="M70 17.500l5-2v4zM183 17.500l-5-2v4zM86 51.500l5-2v4zM114 51.500l-5-2v4z" fill="#000" stroke="none" />
    <g fill="#222" stroke="none" fontSize="10">
      <text x="111" y="15">15050</text>
      <text x="196" y="33">950</text>
      <text x="93" y="46">300</text>
      <text x="135" y="52" fontSize="14">钢筋分</text>
      <text x="178" y="49" fontSize="8">1</text>
      <text x="189" y="52" fontSize="14">段</text>
    </g>
  </svg>
);

const HoopShape = () => (
  <svg width="266" height="56" viewBox="0 0 266 56" fill="none" stroke="#000" className="font-['Liberation_Mono',monospace]">
    <path d="M114.500 7v46M111 7l3 4M111 49l3 4M162 12c10 10 10 26 0 37M160 12h4M160 49h4" />
    <circle cx="143" cy="30" r="20.500" strokeWidth="2.200" />
    <path d="M155 17c4 1 4 5 1 6M157 46c4-3 3-7 0-7" strokeWidth="2" />
    <text x="84" y="35" fontSize="10" fill="#f01020" stroke="none">886</text>
    <text x="179" y="35" fontSize="10" fill="#222" stroke="none">300</text>
  </svg>
);

const columns = [
  ['筋号', 'w-[91px]'],
  ['直径(mm)', 'w-[70px]'],
  ['级别', 'w-[45px]'],
  ['图号', 'w-[41px]'],
  ['图形', 'w-[270px]'],
  ['计算公式', 'w-[208px]'],
  ['公式描述', 'w-[76px]'],
  ['长度', 'w-[48px]'],
  ['根数', 'w-[48px]'],
  ['搭接', 'w-[61px]'],
  ['损耗(%)', 'w-[77px]'],
  ['单重(kg)', 'w-[76px]'],
  ['总重(kg)', 'w-[89px]'],
  ['钢筋归类', 'w-[92px]'],
  ['搭接形式', 'w-[84px]'],
];

const rows = [
  ['护壁纵筋', '22', <Grade bars={1} />, '1', <StraightShape />, '1600', '', '1600', '85', '0', '0', '4.768', '405.28', '直筋', '电渣压力焊'],
  ['桩螺旋箍筋', '8', <Grade bars={0} />, '8', <SpiralShape />, 'Round(sqrt(sqr(Pi*(950+2*d\n))+sqr(300))*(15050+2*d)…', '', '15314\n9', '1', '7680', '0', '63.527', '63.527', '箍筋', '绑扎'],
  ['加劲箍筋', '14', <Grade bars={2} />, '356', <HoopShape />, 'Pi*(886+2*d)+300+2*d\n+2*11.9*d', '', '3533', '77', '0', '0', '4.275', '329.175', '箍筋', '绑扎'],
];

const cellClass = (r, c) => {
  if (c === 0) {
    return `text-[15px] font-['Open_Sans','Noto_Sans_CJK_SC',sans-serif] ${
      r === 0 ? 'border-b-2 border-r-2 border-[#808a94]' : 'border-b border-r border-[#cdd3da]'
    }`;
  }
  if (c === 13 || c === 14) return 'border-b border-r border-[#cdd3da] text-[15px]';
  return 'border-b border-r border-[#cdd3da] text-[13px]';
};

const RebarTable = () => (
  <table className="w-[1385px] table-fixed border-separate border-spacing-0 bg-[#b7deff] text-[#111]">
    <colgroup>
      <col className="w-[9px]" />
      {columns.map(([name, w]) => (
        <col key={name} className={w} />
      ))}
    </colgroup>
    <thead>
      <tr className="h-[27px] bg-[#f0f0f0] text-[15px] leading-5 text-[#444]">
        <th className="border-b border-r border-[#c8c8c8]" />
        {columns.map(([name], i) => (
          <th
            key={name}
            className={`whitespace-nowrap border-b border-r border-[#c8c8c8] p-0 font-normal ${i === 0 ? 'bg-[#7db8f7] text-white' : ''}`}
          >
            {name}
          </th>
        ))}
      </tr>
    </thead>
    <tbody>
      {rows.map((row, r) => (
        <tr key={row[0]} className="h-[57px]">
          <td
            className={`border-b border-r border-[#c8c8c8] p-0 text-[15px] leading-5 ${
              r === 0 ? 'bg-[#7db8f7] text-white' : 'bg-[#f0f0f0] text-[#555]'
            }`}
          >
            {r + 1}
          </td>
          {row.map((v, c) => (
            <td
              key={c}
              className={`overflow-hidden whitespace-pre p-0 font-['Liberation_Mono','Noto_Sans_CJK_SC',monospace] leading-[18px] ${cellClass(r, c)} ${
                c === 4 ? '' : c === 2 ? 'pl-[6px]' : 'pl-[3px]'
              }`}
            >
              {c === 4 ? <span className="-my-px block h-14">{v}</span> : v}
            </td>
          ))}
        </tr>
      ))}
      <tr className="h-[57px]">
        <td className="border-r border-[#c8c8c8] bg-[#f0f0f0]" />
        {columns.map(([name]) => (
          <td key={name} className="border-r border-[#cdd3da]" />
        ))}
      </tr>
    </tbody>
  </table>
);

const RebarPanel = () => (
  <section className="flex h-[282px] shrink-0 flex-col bg-white p-[11px]">
    <div className="flex min-h-0 flex-1 flex-col border border-[#c3c6ca]">
      <div className="flex h-[35px] shrink-0 items-center border-b-2 border-[#c3c6ca] pl-2">
        <button aria-label="上移"><MoveIcon /></button>
        <button aria-label="下移" className="ml-4"><MoveIcon down /></button>
        <button className="ml-2 mr-[6px] flex h-[26px] items-center gap-[5px] rounded border border-[#5ba6f6] bg-[#e6f2fe] px-[6px] text-[15px] leading-5 text-[#1f7bea]">
          <span className="flex items-center text-[14px] text-[#5b9be0]">
            a
            <svg width="5" height="18" viewBox="0 0 5 18" stroke="#777" fill="none">
              <path d="M0 .500h5M0 17.500h5M2.500 0v18" />
            </svg>
            e
          </span>
          参数输入
        </button>
        <div className="flex items-center gap-[13px]">
          <ToolItem icon={<InsertIcon />} label="插入" />
          <ToolItem icon={<DeleteIcon />} label="删除" />
          <ToolItem icon={<ScaleIcon />} label="缩尺配筋" />
          <ToolItem icon={<InfoDocIcon />} label="钢筋信息" />
          <ToolItem icon={<LibraryIcon />} label="钢筋图库" />
          <ToolItem icon={<OtherIcon />} label="其他" caret />
        </div>
      </div>
      <div className="flex min-h-0 flex-1 overflow-hidden">
        <div className="min-w-0 flex-1 overflow-hidden">
          <RebarTable />
        </div>
        <div className="ml-[3px] mr-[5px] mt-[18px] h-[64px] w-[10px] rounded-full bg-[#cacaca]" />
      </div>
      <div className="flex h-[18px] shrink-0 items-center px-[17px]">
        <div className="h-[10px] w-[72%] rounded-full bg-[#cacaca]" />
      </div>
    </div>
  </section>
);

/* ---------- dialog ---------- */

const TableInputDialog = () => (
  <div
    role="dialog"
    aria-label="表格输入"
    className="absolute bottom-[128px] left-[48px] right-[46px] top-[114px] flex flex-col bg-[#f0f0f0] shadow-[2px_2px_5px_rgba(0,0,0,0.55)]"
  >
    <div className="flex h-[33px] shrink-0 items-center justify-between bg-[#2d7fe2] px-[11px] text-white">
      <h2 className="text-[15px] leading-5">表格输入</h2>
      <div className="flex items-center gap-[21px]">
        <button aria-label="最小化" className="pt-1"><Minus size={13} strokeWidth={4} /></button>
        <button aria-label="最大化">
          <svg width="11" height="10" viewBox="0 0 11 10" fill="none" stroke="#fff">
            <path d="M1 1h9v8H1z" strokeWidth="1.500" />
            <path d="M0 1.500h11" strokeWidth="3" />
          </svg>
        </button>
        <button aria-label="关闭"><X size={14} strokeWidth={4} /></button>
      </div>
    </div>
    <div className="relative flex min-h-0 flex-1 flex-col border border-[#b8c4d2] px-2 pb-[9px] pt-[7px]">
      <div className="flex h-[38px] shrink-0 items-center border border-[#cfd2d6] bg-white pl-px">
        <span className="relative flex items-center">
          <select aria-label="楼层" className="h-8 w-[75px] appearance-none border border-[#9a9a9a] bg-white pl-1 text-[15px] leading-5 text-black">
            <option>基础层</option>
          </select>
          <span className="pointer-events-none absolute right-[7px]"><Caret /></span>
        </span>
        <div className="flex items-center gap-[7px] pl-[6px]">
          <ToolItem icon={<SinglePartIcon />} label="单构件存盘" caret />
          <ToolItem icon={<CopyPartIcon />} label="复制构件到其它楼层" caret />
        </div>
      </div>
      <div className="mt-[5px] flex h-[30px] shrink-0 items-end gap-1">
        <button className="h-[30px] w-[79px] shrink-0 rounded-t border border-b-0 border-[#cfd2d6] bg-white text-[15px] leading-5 text-[#2d7fe2]">
          钢筋
        </button>
        <button className="h-[26px] w-[78px] rounded-t bg-[#dedede] text-[15px] leading-5 text-[#444]">土建</button>
      </div>
      <div className="flex min-h-0 flex-1 border border-[#c9ced6]">
        <LeftColumn />
        <div className="ml-[6px] flex min-w-0 flex-1 flex-col gap-[6px]">
          <div className="flex min-h-0 flex-1 gap-[7px]">
            <AtlasList />
            <DrawingPanel />
          </div>
          <RebarPanel />
        </div>
      </div>
      <svg width="9" height="9" viewBox="0 0 9 9" fill="#666" className="absolute bottom-1 right-1">
        <path d="M7 0h2v2H7zM7 3.500h2v2H7zM7 7h2v2H7zM3.500 3.500h2v2h-2zM3.500 7h2v2h-2zM0 7h2v2H0z" />
      </svg>
    </div>
  </div>
);

/* ---------- status bar and task bar ---------- */

const ModeButton = ({ label, active, caret, children }) => (
  <button
    aria-label={label}
    className={`flex h-[31px] items-center gap-[6px] ${
      active ? 'border-2 border-[#4ba0fb] bg-white px-[5px]' : 'border border-[#a0a0a3] bg-[#cfcfd1] px-[6px]'
    }`}
  >
    <Svg size={18} stroke="#444">{children}</Svg>
    {caret && <Caret />}
  </button>
);

const StatusBar = () => (
  <footer className="flex h-[38px] shrink-0 items-center whitespace-nowrap border-t border-[#b8b8b8] bg-[#dedee0] text-[15px] leading-5 text-[#444]">
    <span className="w-[331px] pl-[3px]">X = -6116 Y = 23330</span>
    <span className="flex w-[104px] gap-[6px]"><span>层高：</span><span>3</span></span>
    <span className="flex w-[166px] gap-[6px]"><span>标高：</span><span>-3.15~-0.15</span></span>
    <span className="w-[129px]">0</span>
    <span className="w-[129px]">隐藏：0</span>
    <div className="flex items-center gap-1">
      <ModeButton label="正交">
        <path d="M3 2v15h15M3 11h6v6" strokeWidth="1.500" />
      </ModeButton>
      <ModeButton label="矩形选择" active caret>
        <path d="M4 4h14v15H4z" stroke={BLUE} strokeWidth="1.500" />
        <path d="M0 0h7v7H0z" fill={ORANGE} stroke="none" />
      </ModeButton>
      <span className="px-[2px]">
        <ModeButton label="交点">
          <path d="M1 1l18 18M19 1L1 19" stroke="#8d8d8f" />
          <path d="M8 8h4v4H8z" fill="#8d8d8f" stroke="none" />
        </ModeButton>
      </span>
      <ModeButton label="角度" caret>
        <path d="M17 2L2 18h17" strokeWidth="1.500" />
        <path d="M7 8h5v5H7z" fill="#333" stroke="none" />
      </ModeButton>
      <ModeButton label="偏移" caret>
        <path d="M0 5h9M4.500 0v10" strokeWidth="1.500" />
        <path d="M8 12h12v6H8z" fill="#333" stroke="none" />
      </ModeButton>
      <button className="h-[31px] border border-[#a0a0a3] bg-[#cfcfd1] px-[7px]">跨图层选择</button>
      <button className="h-[31px] border border-[#a0a0a3] bg-[#cfcfd1] px-[7px]">折线选择</button>
    </div>
    <span className="flex-1 pl-[6px]">按鼠标左键指定第一个角点，或拾取构件图元</span>
    <span className="pr-4">333.333 FPS</span>
  </footer>
);

const TaskApp = ({ label, active, running = true, children }) => (
  <button
    aria-label={label}
    className={`flex h-full flex-col items-center ${active ? 'w-[61px] bg-[#3b474c]' : 'w-[51px]'}`}
  >
    <span className="flex flex-1 items-center">{children}</span>
    <span className={`h-[3px] w-full ${running ? 'bg-[#76b9ed]' : ''}`} />
  </button>
);

const TaskBar = () => (
  <div className="flex h-[50px] shrink-0 items-center justify-between bg-[#04141a] text-white">
    <div className="flex h-full items-center">
      <button aria-label="开始菜单" className="pl-5"><FaWindows size={21} /></button>
      <button aria-label="Cortana" className="ml-[39px] h-5 w-5 rounded-full border-[3px] border-white" />
      <button aria-label="任务视图" className="ml-[39px]">
        <svg width="22" height="20" viewBox="0 0 22 20" fill="none" stroke="#fff" strokeWidth="1.500">
          <path d="M1 0v3h13V0M1 6h13v8H1zM1 20v-3h13v3M19 0v20" />
          <path d="M17.500 6h3v4h-3z" fill="#fff" stroke="none" />
        </svg>
      </button>
      <button aria-label="浏览器" className="ml-[38px]">
        <svg width="28" height="28" viewBox="0 0 28 28" fill="#e8ebec">
          {[0, 72, 144, 216, 288].map((a) => (
            <path key={a} transform={`rotate(${a} 14 14)`} d="M13 13C7 12 4 4 10 1c6-2 11 1 9 5-4 0-6 2-6 7z" />
          ))}
        </svg>
      </button>
      <form className="ml-[18px] flex h-[43px]">
        <label className="flex w-[205px] items-center gap-[5px] bg-[#ececec] pl-[5px]">
          <FaInternetExplorer size={23} color="#1787e0" />
          <input
            aria-label="搜索内容"
            defaultValue="郑爽回应联合国发言"
            className="min-w-0 flex-1 bg-transparent text-[15px] leading-5 text-black outline-none"
          />
        </label>
        <button type="button" className="w-[70px] bg-[#1e88ff] text-[15px] leading-5">搜索一下</button>
      </form>
      <div className="flex h-full gap-[11px] pl-[10px]">
        <TaskApp label="Edge" running={false}><FaEdgeLegacy size={25} color="#0f7bd8" /></TaskApp>
        <TaskApp label="CAD">
          <svg width="30" height="30" viewBox="0 0 30 30">
            <rect x="1" y="1" width="28" height="28" rx="3" fill="#1267bf" stroke="#b5bcc2" strokeWidth="2" />
            <text x="3" y="20" fontSize="12" fontWeight="bold" fill="#dfeaf4">CAD</text>
          </svg>
        </TaskApp>
        <div className="-mx-[5px] h-full">
          <TaskApp label="GTJ2018" active>
            <svg width="30" height="30" viewBox="0 0 30 30">
              <rect width="30" height="30" rx="5" fill="#2f86e4" />
              <path d="M5 6c7 1 14-1 20-1v5h-7l1 15h-7l1-15H5z" fill="#f2f8fd" />
            </svg>
          </TaskApp>
        </div>
        <TaskApp label="360浏览器">
          <svg width="28" height="28" viewBox="0 0 28 28" fill="none">
            <circle cx="14" cy="14" r="12.500" fill="#6cc22f" stroke="#f2f7ec" strokeWidth="1.500" />
            <path d="M20 19c-4 4-11 2-11-4 0-7 11-8 11-1H9" stroke="#fff" strokeWidth="3" />
            <path d="M4 26C1 18 12 3 26 1" stroke="#4aa31a" strokeWidth="1.500" />
          </svg>
        </TaskApp>
        <TaskApp label="文件资源管理器">
          <svg width="28" height="24" viewBox="0 0 28 24">
            <path d="M0 1h11l2 3h15v19H0z" fill="#f9dc84" />
            <path d="M0 1h11l2 3H0z" fill="#f3b832" />
            <path d="M5 12h18v12h-5v-6h-8v6H5z" fill="#35b0e8" />
          </svg>
        </TaskApp>
        <TaskApp label="微信">
          <span className="flex h-[30px] w-[30px] items-center justify-center bg-[#0aad1c]"><FaWeixin size={23} /></span>
        </TaskApp>
      </div>
    </div>
    <div className="flex h-full items-center text-[15px] leading-5">
      <svg width="20" height="20" viewBox="0 0 20 20" fill="#fff">
        <path d="M4 19C-1 18 0 11 4 11c0-4 3-6 6-8 2 2 4 4 4 8 6 1 5 8 0 8z" />
        <path d="M15 5l1-4M18 8l2-2M12 3l0-2" stroke="#fff" />
      </svg>
      <span className="ml-[14px] w-[32px]">18℃</span>
      <svg width="18" height="19" viewBox="0 0 18 19" fill="none" stroke="#fff" strokeWidth="1.500" className="ml-8">
        <circle cx="12.500" cy="4" r="3" />
        <circle cx="5" cy="10" r="2.500" />
        <path d="M1 18c0-6 8-6 8 0M9 10c2-3 8-2 8 4" />
      </svg>
      <ChevronUp size={22} strokeWidth={1.500} className="ml-[25px]" />
      <svg width="20" height="20" viewBox="0 0 20 20" className="ml-[9px]">
        <circle cx="10" cy="10" r="9.500" fill="#f7cf12" />
        <path d="M1 9C1 3 8-1 14 1M19 11c0 6-7 10-13 8" stroke="#5aa51e" strokeWidth="2" fill="none" />
        <path d="M5 10h10M10 5v10" stroke="#1e7a1e" strokeWidth="3" />
      </svg>
      <svg width="20" height="16" viewBox="0 0 20 16" fill="none" stroke="#fff" className="ml-[10px]">
        <path d="M6 4h12v10H5v-4M18 7h2v4h-2M1 1v2M4 1v2M0 3h5v3H0zM2.500 6v5h3" />
        <path d="M7 6h10v6H7z" fill="#fff" />
      </svg>
      <svg width="17" height="17" viewBox="0 0 17 17" fill="none" stroke="#fff" className="ml-3">
        <path d="M1 16C1 8 8 1 16 1M5 16c0-6 5-11 11-11M9 16c0-4 3-7 7-7M13 16c0-2 1-3 3-3" />
      </svg>
      <svg width="20" height="16" viewBox="0 0 20 16" fill="none" stroke="#fff" className="ml-[10px]">
        <path d="M1 5h3l4-4v14l-4-4H1zM11 5c1 2 1 4 0 6M14 3c2 3 2 7 0 10" />
        <path d="M17 1c3 4 3 10 0 14" stroke="#6e7a7e" />
      </svg>
      <span className="ml-[10px] text-[17px]">中</span>
      <span className="ml-[19px] flex h-[19px] w-[19px] items-center justify-center bg-white text-black">拼</span>
      <time className="ml-[25px] flex w-[68px] flex-col items-center leading-[23px]">
        <span>9:19</span>
        <span>2020/1/7</span>
      </time>
      <svg width="20" height="20" viewBox="0 0 20 20" fill="none" stroke="#fff" strokeWidth="1.300" className="ml-7">
        <path d="M1 1h18v14h-6l-3 4-3-4H1z" />
      </svg>
      <span className="ml-[25px] mr-[5px] h-full w-px bg-[#4d595d]" />
    </div>
  </div>
);

const App = () => (
  <div className="relative flex h-screen flex-col overflow-hidden bg-[#d5d6da] font-['Open_Sans','Noto_Sans_CJK_SC',sans-serif]">
    <Header />
    <Ribbon />
    <div className="flex h-[34px] shrink-0 items-center border-y border-[#8f9296] bg-[#c9cbcf] pl-[2px]">
      <span className="flex h-[29px] w-[90px] items-center border border-[#9a9a9a] bg-white pl-[5px] text-[15px] leading-5 text-black">
        基础层
      </span>
    </div>
    <div className="flex min-h-0 flex-1">
      <NavPanel />
      <div className="ml-[6px] mr-[4px] w-[350px] shrink-0 border border-[#cfd2d6] bg-white" />
      <MainCanvas />
    </div>
    <StatusBar />
    <TaskBar />

    <TableInputDialog />

    {/* floating gadgets at the screen edge */}
    <svg width="10" height="74" viewBox="0 0 10 74" className="absolute right-[3px] top-[120px]">
      <rect y="1" width="10" height="70" rx="3" fill="#555" />
      <path d="M1 60h8M1 63h8M1 66h8M1 69h8" stroke="#49d85a" strokeWidth="2" />
      <path d="M3 73h4" stroke="#333" strokeWidth="2" />
    </svg>
    <svg width="14" height="68" viewBox="0 0 14 68" className="absolute right-0 top-[443px]">
      <rect x="4" y="1" width="6" height="56" rx="3" fill="#4d5b66" />
      <path d="M7 22v34" stroke="#2b8fd6" strokeWidth="4" />
      <circle cx="7" cy="61" r="6" fill="#3fb2ec" />
    </svg>
  </div>
);

export default App;
